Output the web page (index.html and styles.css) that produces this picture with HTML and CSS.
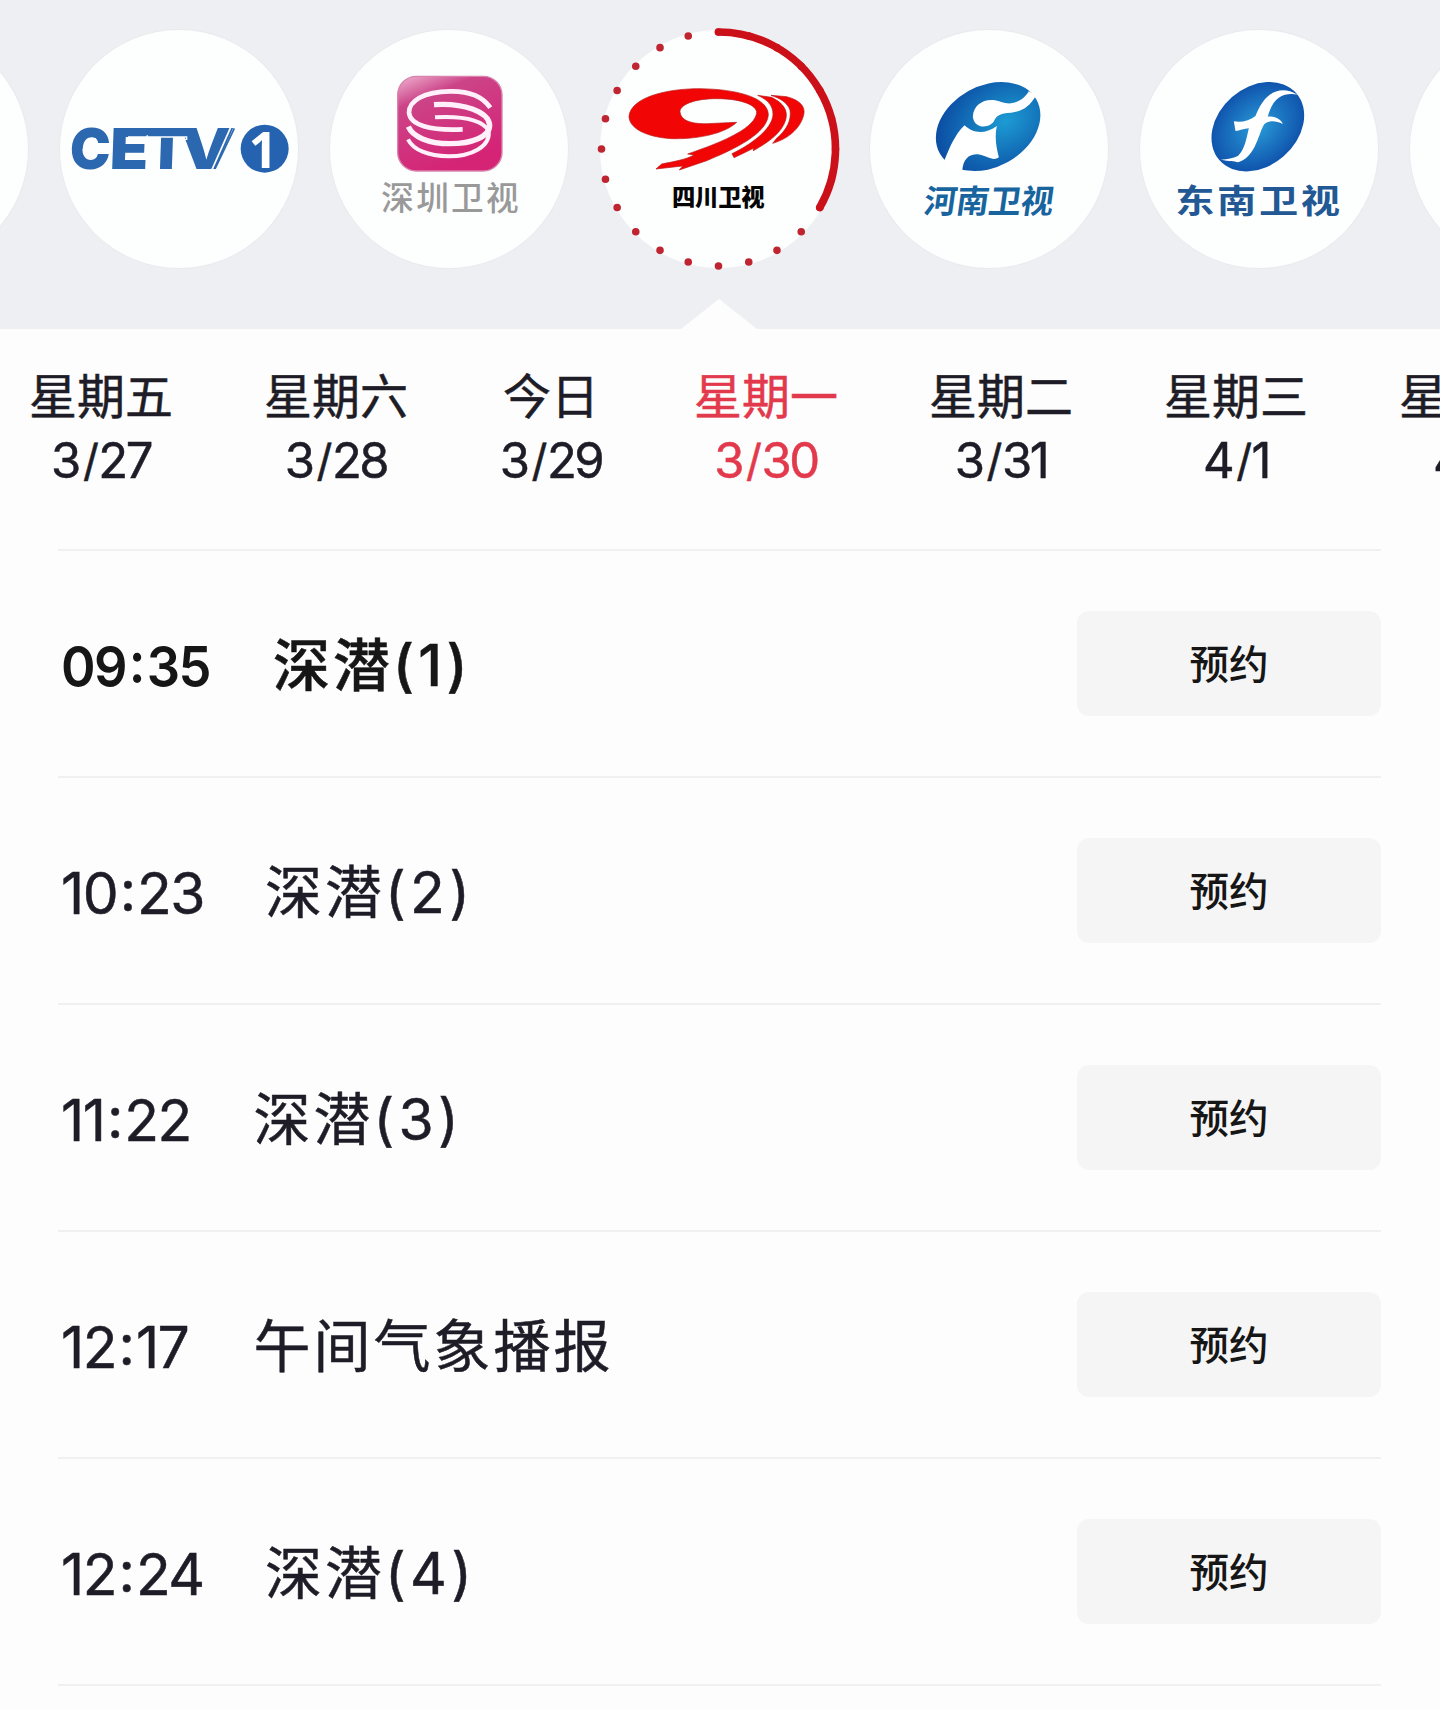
FILE: index.html
```html
<!DOCTYPE html>
<html lang="zh-CN">
<head>
<meta charset="utf-8">
<title>节目单</title>
<link rel="stylesheet" href="styles.css">
</head>
<body>
<main class="app">
  <header class="channels">
    <div class="channel"></div>
    <div class="channel">
      <svg class="logo" viewBox="0 0 238 238"><g transform="translate(-60 -30) scale(.33333)">
        <text class="t-cetv" transform="translate(0 507) skewX(-2)" y="0"><tspan x="208" textLength="122" lengthAdjust="spacingAndGlyphs">C</tspan><tspan x="328" textLength="116" lengthAdjust="spacingAndGlyphs">E</tspan><tspan x="436" textLength="124" lengthAdjust="spacingAndGlyphs">T</tspan><tspan x="534" textLength="166" lengthAdjust="spacingAndGlyphs">V</tspan></text>
        <path d="M345 384H585V406H345Z" fill="#2b68b0"/>
        <path d="M386 425V411H560V418H524V507M386 470H437V440" fill="none" stroke="#fdfefe" stroke-width="4"/>
        <path d="M692 382L636 509" fill="none" stroke="#fdfefe" stroke-width="5"/>
        <path d="M703 385L645 507" fill="none" stroke="#2b68b0" stroke-width="5"/>
        <path d="M288 416C246 425 240 458 262 474" fill="none" stroke="#fdfefe" stroke-width="4"/>
        <circle cx="794" cy="446" r="72" fill="#2562b0"/>
        <text class="t-one" x="789" y="505" text-anchor="middle">1</text>
      </g></svg>
    </div>
    <div class="channel">
      <svg class="logo" viewBox="0 0 238 238">
        <defs><linearGradient id="pink" x1="0" y1="0" x2=".45" y2="1"><stop offset="0" stop-color="#efb5d2"/><stop offset=".28" stop-color="#cc4488"/><stop offset="1" stop-color="#d52376"/></linearGradient></defs>
        <g transform="translate(-10 -10) scale(.33333)">
        <rect x="233" y="169" width="313" height="284" rx="56" fill="url(#pink)" stroke="#d884ac" stroke-width="4"/>
        <g fill="none" stroke="#fff0fa" stroke-width="16">
          <path d="M511 263C485 225 440 213 390 214C310 215 267 243 267 278C270 315 330 333 428 328" stroke-width="14"/>
          <path d="M342 254C430 248 505 275 509 315C510 350 455 371 390 371C325 371 278 350 265 320"/>
          <path d="M345 292C420 288 485 298 506 332C512 380 455 409 385 409C325 408 280 390 264 358" stroke-width="12"/>
        </g>
        <text class="t-shenzhen" x="184" y="570" textLength="412">深圳卫视</text>
      </g></svg>
    </div>
    <div class="channel channel--active">
      <svg class="logo" viewBox="0 0 238 238">
        <g transform="translate(-10 -10) scale(.33333)">
        <g fill="#f20505" stroke="#b51a1a" stroke-width="2">
          <path d="M440 307C400 345 310 358 245 356C170 352 117 325 117 289C122 235 220 206 330 206C450 208 535 235 535 285C530 340 440 385 350 422L268 450L278 438L198 447L215 432C250 425 290 418 312 405L293 402C340 385 400 365 450 335C490 310 500 290 500 275C495 250 440 236 380 236C310 236 270 255 270 275C272 300 300 312 350 311Z"/>
          <path d="M503 226L545 232C580 250 595 270 587 300C575 340 530 370 490 392L490 385C470 395 450 405 432 413L426 401C480 375 545 330 549 285C550 255 530 238 503 226Z"/>
          <path d="M543 226L590 230C630 240 645 260 642 280C635 320 600 355 548 370L560 355C590 330 605 300 600 270C592 248 570 235 543 226Z"/>
        </g>
        <text class="t-sichuan" x="246" y="558" textLength="278">四川卫视</text>
        </g>
        <circle class="ring-dots" cx="118.5" cy="119" r="117" pathLength="24"/>
        <path class="ring-arc" d="M118.5 2A117 117 0 0 1 219.8 177.5"/>
      </svg>
    </div>
    <div class="channel">
      <svg class="logo" viewBox="0 0 238 238">
        <defs><radialGradient id="henan" cx=".66" cy=".55" r=".65"><stop offset="0" stop-color="#1d9bd3"/><stop offset=".5" stop-color="#1475bb"/><stop offset="1" stop-color="#0c4fa5"/></radialGradient></defs>
        <g transform="translate(-10.5 -10) scale(.33333)">
        <ellipse cx="386" cy="320" rx="166" ry="122" transform="rotate(-29 385 320)" fill="url(#henan)"/>
        <path fill="#fff" d="M340 290C342 255 370 238 400 240C420 242 435 252 455 250C480 245 495 235 508 214L530 226C510 262 485 275 455 278C420 278 410 290 405 300C395 325 345 330 340 290ZM255 420C270 385 285 345 315 316C340 340 375 345 412 318C405 350 410 380 418 412C400 425 385 408 355 403C330 402 310 415 308 456L262 445Z"/>
        <text class="t-henan" transform="translate(190 578) skewX(-8)" x="0" y="0" textLength="388">河南卫视</text>
      </g></svg>
    </div>
    <div class="channel">
      <svg class="logo" viewBox="0 0 238 238">
        <defs><radialGradient id="dongnan" cx=".5" cy=".5" r=".55"><stop offset="0" stop-color="#2a9cd8"/><stop offset="1" stop-color="#0d4da9"/></radialGradient></defs>
        <g transform="translate(-10.5 -10) scale(.33333)">
        <ellipse cx="385" cy="320" rx="153" ry="118" transform="rotate(-41 385 320)" fill="url(#dongnan)"/>
        <path fill="#fff" d="M504 224C470 203 440 210 420 225C400 240 390 260 378 288C360 303 335 308 313 304L318 333C330 333 345 325 358 325C350 360 345 390 325 408C310 415 295 418 274 419C300 425 315 422 325 427C350 422 370 395 380 370C390 350 395 325 405 312C420 300 440 303 460 312C455 300 440 287 415 290C420 270 430 245 450 232C465 222 485 220 504 224Z"/>
        <text class="t-dongnan" transform="translate(137 578) scale(1.2 1)" x="0" y="0" textLength="412">东南卫视</text>
      </g></svg>
    </div>
    <div class="channel"></div>
    <div class="pointer"></div>
  </header>

  <nav class="days">
    <div class="day"><span>星期五</span><span class="date">3<i class="slash">/</i>27</span></div>
    <div class="day"><span>星期六</span><span class="date">3<i class="slash">/</i>28</span></div>
    <div class="day day--today"><span>今日</span><span class="date">3<i class="slash">/</i>29</span></div>
    <div class="day day--active"><span>星期一</span><span class="date">3<i class="slash">/</i>30</span></div>
    <div class="day"><span>星期二</span><span class="date">3<i class="slash">/</i>31</span></div>
    <div class="day"><span>星期三</span><span class="date">4<i class="slash">/</i>1</span></div>
    <div class="day"><span>星期四</span><span class="date">4<i class="slash">/</i>2</span></div>
  </nav>

  <section class="programs">
    <div class="program program--next"><span class="time w-a">09<i class="colon">:</i>35</span><span class="name">深潜<span class="num">(1)</span></span><button class="book">预约</button></div>
    <div class="program"><span class="time w-b">10<i class="colon">:</i>23</span><span class="name">深潜<span class="num">(2)</span></span><button class="book">预约</button></div>
    <div class="program"><span class="time w-c">11<i class="colon">:</i>22</span><span class="name">深潜<span class="num">(3)</span></span><button class="book">预约</button></div>
    <div class="program"><span class="time w-c">12<i class="colon">:</i>17</span><span class="name">午间气象播报</span><button class="book">预约</button></div>
    <div class="program"><span class="time w-b">12<i class="colon">:</i>24</span><span class="name">深潜<span class="num">(4)</span></span><button class="book">预约</button></div>
  </section>
</main>
</body>
</html>
```
FILE: styles.css
```css
* { box-sizing: border-box; }
body { margin: 0; background: #fdfdfd; color: #1e1d27; font-family: Inter, "Noto Sans CJK SC", sans-serif; }
i { font-style: normal; }
.app { width: 1440px; height: 1709px; overflow: hidden; }

.channels { position: relative; display: flex; justify-content: center; gap: 32px; height: 329px; padding: 30px 3px 0 0; background: #edeff3; overflow: hidden; }
.channel { flex: none; width: 238px; height: 238px; border-radius: 50%; background: #fdfefe; box-shadow: 0 0 0 1px #e8ebed; }
.channel--active { box-shadow: none; }
.logo { display: block; width: 238px; height: 238px; overflow: visible; }
.pointer { position: absolute; left: 681px; bottom: 0; width: 76px; height: 30px; background: #fdfdfd; clip-path: polygon(50% 0, 100% 100%, 0 100%); }
.ring-dots { fill: none; stroke: #bf2530; stroke-width: 7.6; stroke-linecap: round; stroke-dasharray: 0 1; }
.ring-arc { fill: none; stroke: #cc1019; stroke-width: 7.6; stroke-linecap: round; }

.logo text { font-family: "Noto Sans CJK SC", sans-serif; }
.logo .t-cetv { font: 900 169px Inter, sans-serif; fill: #2b68b0; }
.logo .t-one { font: 700 150px "Noto Sans", sans-serif; fill: #fff; }
.t-shenzhen { font-size: 98px; font-weight: 500; fill: #999; }
.t-sichuan { font-size: 70px; font-weight: 900; fill: #050505; }
.t-henan { font-size: 98px; font-weight: 700; fill: #17649f; }
.t-dongnan { font-size: 98px; font-weight: 700; fill: #225894; }

.days { display: flex; gap: 91px; height: 220px; padding: 36px 0 0 29px; -webkit-text-stroke: .5px currentColor; }
.day { flex: none; display: flex; flex-direction: column; align-items: center; width: 144px; font-size: 48px; line-height: 64px; white-space: nowrap; }
.day--today { width: 104px; }
.day--active { color: #e23a4c; }
.date { font-size: 49px; letter-spacing: -2.5px; }
.slash { margin: 0 2px 0 4px; font-size: 44px; line-height: 0; vertical-align: 2px; }

.programs { margin: 0 59px 0 58px; }
.program { display: flex; align-items: center; height: 227px; border-top: 2px solid #f0f0f1; font-size: 57px; -webkit-text-stroke: .5px currentColor; }
.programs::after { content: ""; display: block; height: 2px; background: #f0f0f1; }
.time { flex: none; padding: 5px 0 0 3px; letter-spacing: -1.5px; white-space: nowrap; }
.colon { margin: 0 2.5px; line-height: 0; vertical-align: 3px; }
.w-a { width: 215px; }
.w-b { width: 207px; }
.w-c { width: 195.5px; }
.name { flex: 1; padding-bottom: 6px; letter-spacing: 3px; white-space: nowrap; }
.num { letter-spacing: 4.3px; }
.program--next { color: #161616; font-weight: 500; }
.program--next .time { font-weight: 600; letter-spacing: -1.7px; transform: scaleX(.92); transform-origin: 3px 50%; -webkit-text-stroke: 0; }
.program--next .colon { margin: 0 3px; vertical-align: 4px; }
.book { width: 304px; height: 105px; padding: 0 0 4px; border: 0; border-radius: 12px; background: #f5f5f5; color: #161616; font: 500 39.5px "Noto Sans CJK SC", sans-serif; -webkit-text-stroke: 0; }
```
